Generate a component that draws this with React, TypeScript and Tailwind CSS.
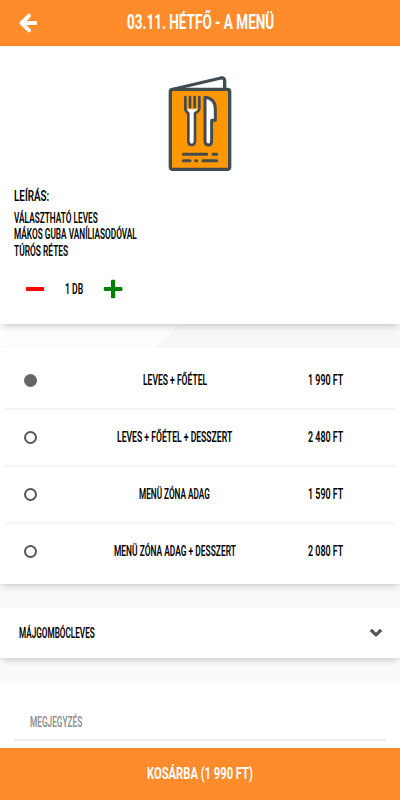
import { useLayoutEffect, useRef, useState } from "react"

const OPTIONS = [
  { name: "LEVES + FŐÉTEL", width: 64, price: "1 990 FT" },
  { name: "LEVES + FŐÉTEL + DESSZERT", width: 115, price: "2 480 FT" },
  { name: "MENÜ ZÓNA ADAG", width: 71, price: "1 590 FT" },
  { name: "MENÜ ZÓNA ADAG + DESSZERT", width: 122, price: "2 080 FT" },
]

const DESCRIPTION = [
  { text: "VÁLASZTHATÓ LEVES", width: 84 },
  { text: "MÁKOS GUBA VANÍLIASODÓVAL", width: 123 },
  { text: "TÚRÓS RÉTES", width: 54 },
]

type CondensedProps = {
  children: string
  width: number
  className?: string
}

// Squeezes a line of text horizontally to the given width
function Condensed({ children, width, className = "" }: CondensedProps) {
  const ref = useRef<HTMLSpanElement>(null)
  const [scale, setScale] = useState(0.6)

  useLayoutEffect(() => {
    if (ref.current) setScale(width / ref.current.offsetWidth)
  }, [width, children])

  return (
    <span className={`block ${className}`} style={{ width }}>
      <span
        ref={ref}
        className="inline-block origin-left whitespace-nowrap"
        style={{ transform: `scaleX(${scale})` }}
      >
        {children}
      </span>
    </span>
  )
}

function ArrowLeftIcon() {
  return (
    <svg width="20" height="20" viewBox="0 0 20 20" fill="none" stroke="currentColor" strokeWidth="4" strokeLinejoin="round">
      <path d="M10 2.600 2.600 10l7.400 7.400" strokeLinecap="round" />
      <path d="M3.500 10h14.300" />
    </svg>
  )
}

function MinusIcon() {
  return (
    <svg width="20" height="20" viewBox="0 0 20 20" fill="currentColor">
      <rect x="0.8" y="7.9" width="18.4" height="4.2" rx="1" />
    </svg>
  )
}

function PlusIcon() {
  return (
    <svg width="20" height="20" viewBox="0 0 20 20" fill="currentColor">
      <rect x="0.8" y="7.9" width="18.6" height="4.2" rx="1" />
      <rect x="8" y="0.7" width="4.2" height="18.6" rx="1" />
    </svg>
  )
}

function ChevronDownIcon() {
  return (
    <svg width="14" height="10" viewBox="0 0 14 10" fill="none" stroke="#555" strokeWidth="3.2" strokeLinejoin="round">
      <path d="M1.8 1.8 7 6.8l5.2-5" />
    </svg>
  )
}

function MenuIllustration() {
  return (
    <svg
      width="100"
      height="115"
      viewBox="0 0 300 345"
      fill="none"
      stroke="#414b50"
      strokeWidth="10"
      strokeLinecap="round"
      strokeLinejoin="round"
    >
      <path d="M72 72 213 39q11-2 11 9v25" fill="#fff" />
      <rect x="61" y="73" width="178" height="240" rx="7" fill="#ff9800" />
      <path
        d="M116 140v88q0 12 9 12t9-12v-88q14-5 14-17l-8 10h-30l-8-10q0 12 14 17z"
        fill="#fff"
        stroke="none"
      />
      <path
        d="M106 96v34q0 10 9 15v84q0 11 10 11t10-11v-84q13-6 13-17V96M120 96v30M134 96v30"
        strokeWidth="8"
      />
      <path
        d="M165 97v131q0 12 10 12t10-12v-62h11v-33q0-33-31-36z"
        fill="#fff"
        strokeWidth="9"
      />
      <path d="M100 268h70M189 268h11M100 287h20M137 287h3M159 287h41" strokeWidth="9" />
    </svg>
  )
}

export default function App() {
  const [selected, setSelected] = useState(0)
  const [count, setCount] = useState(1)

  return (
    <div className="flex h-[800px] w-[400px] flex-col overflow-hidden bg-[#fafafa] font-['Roboto','Liberation_Sans',sans-serif] text-[14px] font-semibold text-black">
      <header className="flex h-[46px] shrink-0 items-center border-b border-[#fb8420] bg-[#ff8b2b] px-5 text-white">
        <button type="button" aria-label="Vissza" className="-ml-px w-[108px]">
          <ArrowLeftIcon />
        </button>
        <Condensed width={147} className="-mt-0.5 text-[21px] leading-7 font-bold">
          03.11. HÉTFŐ - A MENÜ
        </Condensed>
      </header>

      <section className="z-10 h-[278px] shrink-0 bg-white px-3.5 shadow-[0_4px_7px_-2px_rgba(0,0,0,0.2)]">
        <div className="flex justify-center pt-[19px]">
          <MenuIllustration />
        </div>
        <Condensed width={35} className="mt-[5px] text-[15.5px] leading-[22px]">
          LEÍRÁS:
        </Condensed>
        <div className="mt-[3px] leading-[16.4px]">
          {DESCRIPTION.map((line) => (
            <Condensed key={line.text} width={line.width}>
              {line.text}
            </Condensed>
          ))}
        </div>
        <div className="mt-5 flex h-5 items-center pl-[11px]">
          <button
            type="button"
            aria-label="Kevesebb"
            className="text-[#ff0000]"
            onClick={() => setCount(Math.max(1, count - 1))}
          >
            <MinusIcon />
          </button>
          <Condensed width={18} className="ml-5">
            {`${count} DB`}
          </Condensed>
          <button
            type="button"
            aria-label="Több"
            className="ml-5 text-[#008000]"
            onClick={() => setCount(count + 1)}
          >
            <PlusIcon />
          </button>
        </div>
      </section>

      <div className="h-6 shrink-0 bg-[linear-gradient(135deg,#fdfdfd_0_42%,#f7f7f7_42%_100%)]" />

      <section className="h-[236px] shrink-0 bg-white px-[5px] pt-[4.5px] shadow-[0_4px_7px_-2px_rgba(0,0,0,0.2)]">
        {OPTIONS.map((option, index) => (
          <button
            key={option.name}
            type="button"
            onClick={() => setSelected(index)}
            className="flex h-[57px] w-full items-center border-b-2 border-[#f5f5f5] pl-[19px] last:border-transparent"
          >
            <span
              className={`size-[13px] rounded-full border-2 ${
                index === selected ? "border-[#666] bg-[#666]" : "border-[#555] bg-white"
              }`}
            />
            <span className="ml-[52px] flex w-[171px] justify-center">
              <Condensed width={option.width}>{option.name}</Condensed>
            </span>
            <Condensed width={35} className="ml-12">
              {option.price}
            </Condensed>
          </button>
        ))}
      </section>

      <section className="mt-6 flex h-[50px] shrink-0 items-center justify-between bg-white pr-[17px] pl-[19px] shadow-[0_4px_7px_-2px_rgba(0,0,0,0.2)]">
        <Condensed width={76}>MÁJGOMBÓCLEVES</Condensed>
        <ChevronDownIcon />
      </section>

      <section className="mt-[25px] h-[65px] shrink-0 bg-white px-3.5">
        <div className="h-[58px] border-b-2 border-[#eee] pt-[29px] pl-4 text-[#909090]">
          <Condensed width={52}>MEGJEGYZÉS</Condensed>
        </div>
      </section>

      <button
        type="button"
        className="flex h-[52px] w-full shrink-0 items-center justify-center bg-[#ff8b2b] text-[17px] text-white"
      >
        <Condensed width={106} className="font-bold">
          KOSÁRBA (1 990 FT)
        </Condensed>
      </button>
    </div>
  )
}
